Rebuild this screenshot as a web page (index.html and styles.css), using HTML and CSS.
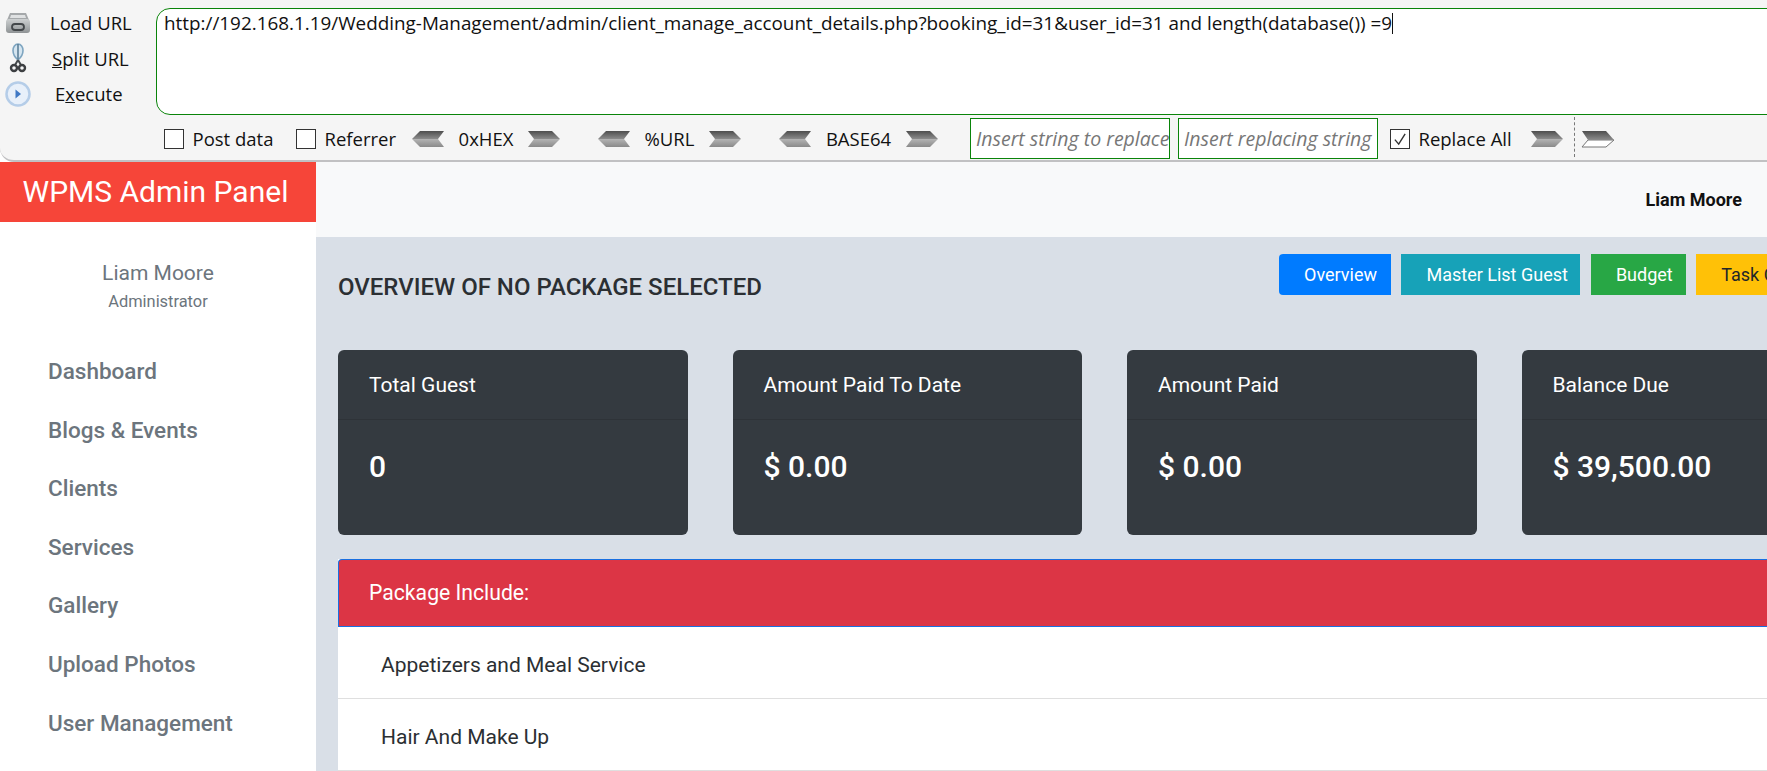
FILE: index.html
```html
<html>
    <head>
        <title>WPMS Admin Panel</title>
        <link rel="stylesheet" href="styles.css">
    </head>
    <body>
        <div class="hackbar">
            <div class="actions">
                <div class="action">
                    <svg class="act-icon" viewBox="0 0 26 26">
                        <defs>
                            <linearGradient id="arrowTop" x1="0" y1="0" x2="0" y2="1"><stop offset="0" stop-color="#4e4e4e"/><stop offset="1" stop-color="#8c8c8c"/></linearGradient>
                            <linearGradient id="arrowLow" x1="0" y1="0" x2="0" y2="1"><stop offset="0" stop-color="#b4b4b4"/><stop offset="1" stop-color="#8a8a8a"/></linearGradient>
                            <linearGradient id="loadBody" x1="0" y1="0" x2="0" y2="1"><stop offset="0" stop-color="#cdd0d1"/><stop offset="1" stop-color="#8f9395"/></linearGradient>
                        </defs>
                        <path d="M5 3h16l3 7H2z" fill="#a5a8aa"/>
                        <path d="M6 5h14l1 3H5z" fill="#dfe1e2"/>
                        <rect x="1" y="9" width="24" height="14" rx="3" fill="url(#loadBody)"/>
                        <rect x="7" y="14" width="12" height="6" rx="3" fill="none" stroke="#43474a" stroke-width="1.800"/>
                    </svg>
                    <span class="act-label act-load">Lo<u>a</u>d URL</span>
                </div>
                <div class="action">
                    <svg class="act-icon act-tall" viewBox="0 0 26 30">
                        <path d="M13 17c-3-2.500-5-6-5-9.500S10 1 13 1s5 3 5 6.500-2 7-5 9.500z" fill="#d5e5f0" stroke="#7ea5c0" stroke-width="1.600"/>
                        <path d="M13 1v15" stroke="#5c7f98" stroke-width="1.600"/>
                        <path d="M13 17l-3 5M13 17l3 5" stroke="#44484b" stroke-width="2"/>
                        <circle cx="9" cy="25" r="3" fill="none" stroke="#3d3f42" stroke-width="2.400"/>
                        <circle cx="17" cy="25" r="3" fill="none" stroke="#3d3f42" stroke-width="2.400"/>
                    </svg>
                    <span class="act-label act-split"><u>S</u>plit URL</span>
                </div>
                <div class="action">
                    <svg class="act-icon" viewBox="0 0 26 26"><circle cx="13" cy="13" r="11.500" fill="#e8f0fa" stroke="#b5cde8" stroke-width="2.500"/><path d="M10.500 8.500l5.500 4.500-5.500 4.500z" fill="#3f78c4"/></svg>
                    <span class="act-label act-exec">E<u>x</u>ecute</span>
                </div>
            </div>
            <div class="hack-right">
                <div class="url-box">http://192.168.1.19/Wedding-Management/admin/client_manage_account_details.php?booking_id=31&amp;user_id=31 and length(database()) =9<span class="caret"></span></div>
                <div class="options">
                    <label class="check check-post"><span class="box"></span>Post data</label>
                    <label class="check check-ref"><span class="box"></span>Referrer</label>
                    <div class="codec codec-hex">
                        <svg class="arrow" viewBox="0 0 34 18"><path d="M9 1h24l-6 8H1z" fill="url(#arrowTop)"/><path d="M1 9h26l6 8H9z" fill="url(#arrowLow)"/></svg>
                        <span>0xHEX</span>
                        <svg class="arrow" viewBox="0 0 34 18"><path d="M1 1h24l8 8H7z" fill="url(#arrowTop)"/><path d="M7 9h26l-8 8H1z" fill="url(#arrowLow)"/></svg>
                    </div>
                    <div class="codec codec-url">
                        <svg class="arrow" viewBox="0 0 34 18"><path d="M9 1h24l-6 8H1z" fill="url(#arrowTop)"/><path d="M1 9h26l6 8H9z" fill="url(#arrowLow)"/></svg>
                        <span>%URL</span>
                        <svg class="arrow" viewBox="0 0 34 18"><path d="M1 1h24l8 8H7z" fill="url(#arrowTop)"/><path d="M7 9h26l-8 8H1z" fill="url(#arrowLow)"/></svg>
                    </div>
                    <div class="codec codec-b64">
                        <svg class="arrow" viewBox="0 0 34 18"><path d="M9 1h24l-6 8H1z" fill="url(#arrowTop)"/><path d="M1 9h26l6 8H9z" fill="url(#arrowLow)"/></svg>
                        <span>BASE64</span>
                        <svg class="arrow" viewBox="0 0 34 18"><path d="M1 1h24l8 8H7z" fill="url(#arrowTop)"/><path d="M7 9h26l-8 8H1z" fill="url(#arrowLow)"/></svg>
                    </div>
                    <div class="replace-in"><span>Insert string to replace</span></div>
                    <div class="replace-in replace-two"><span>Insert replacing string</span></div>
                    <label class="check check-all"><span class="box"><svg viewBox="0 0 14 14"><path d="M3 7.500l3 3.500 5-8" fill="none" stroke="#333" stroke-width="1.100"/></svg></span>Replace All</label>
                    <svg class="arrow" viewBox="0 0 34 18"><path d="M1 1h24l8 8H7z" fill="url(#arrowTop)"/><path d="M7 9h26l-8 8H1z" fill="url(#arrowLow)"/></svg>
                    <span class="dash"></span>
                    <svg class="arrow arrow-last" viewBox="0 0 34 18"><path d="M7 10h26l-8 7H1z" fill="#fff" stroke="#777"/><path d="M1 1h24l8 9H7z" fill="url(#arrowTop)"/></svg>
                </div>
            </div>
        </div>
        <div class="layout">
            <div class="sidebar">
                <div class="brand">WPMS Admin Panel</div>
                <div class="profile">
                    <p class="profile-name">Liam Moore</p>
                    <p class="profile-role">Administrator</p>
                </div>
                <ul class="menu">
                    <li>Dashboard</li>
                    <li>Blogs &amp; Events</li>
                    <li>Clients</li>
                    <li>Services</li>
                    <li>Gallery</li>
                    <li>Upload Photos</li>
                    <li>User Management</li>
                </ul>
            </div>
            <div class="content">
                <div class="topbar"><span>Liam Moore</span></div>
                <div class="main">
                    <div class="title-row">
                        <h1>OVERVIEW OF NO PACKAGE SELECTED</h1>
                        <div class="btns">
                            <a class="btn btn-blue">Overview</a>
                            <a class="btn btn-teal">Master List Guest</a>
                            <a class="btn btn-green">Budget</a>
                            <a class="btn btn-yellow">Task Checklist</a>
                        </div>
                    </div>
                    <div class="cards">
                        <div class="card">
                            <div class="card-head">Total Guest</div>
                            <div class="card-body">0</div>
                        </div>
                        <div class="card">
                            <div class="card-head">Amount Paid To Date</div>
                            <div class="card-body">$ 0.00</div>
                        </div>
                        <div class="card">
                            <div class="card-head">Amount Paid</div>
                            <div class="card-body">$ 0.00</div>
                        </div>
                        <div class="card">
                            <div class="card-head">Balance Due</div>
                            <div class="card-body">$ 39,500.00</div>
                        </div>
                    </div>
                    <div class="package">
                        <div class="package-head">Package Include:</div>
                        <div class="package-row">Appetizers and Meal Service</div>
                        <div class="package-row">Hair And Make Up</div>
                    </div>
                </div>
            </div>
        </div>
    </body>
</html>
```

FILE: styles.css
```css
*{
    margin: 0;
    padding: 0;
    box-sizing: border-box;
}
html,body{
    width: 1767px;
    height: 771px;
    overflow: hidden;
}
body{
    background: #fff;
    font-family: Roboto, sans-serif;
}
.hackbar{
    height: 162px;
    display: flex;
    background: #f5f5f5;
    border-bottom: 2px solid #c1c1c3;
    border-bottom-left-radius: 14px;
    font-family: "Open Sans", "Noto Sans", sans-serif;
    color: #111;
}
.actions{
    width: 156px;
    flex: none;
    padding-top: 5px;
}
.action{
    height: 35.500px;
    display: flex;
    align-items: center;
}
.act-icon{
    width: 26px;
    height: 26px;
    margin-left: 5px;
    flex: none;
}
.act-tall{
    height: 30px;
}
.act-label{
    font-size: 18.500px;
}
.act-load{
    margin-left: 19px;
}
.act-split{
    margin-left: 21px;
}
.act-exec{
    margin-left: 24px;
}
.hack-right{
    flex: 1;
    min-width: 0;
}
.url-box{
    margin-top: 8px;
    height: 107px;
    margin-right: -20px;
    background: #fff;
    border: 1px solid #0a840a;
    border-radius: 14px;
    padding: 1px 7px;
    font-size: 18.880px;
    line-height: 26px;
    white-space: nowrap;
}
.caret{
    display: inline-block;
    width: 1px;
    height: 21px;
    background: #111;
    vertical-align: -4px;
}
.options{
    display: flex;
    align-items: center;
    height: 47px;
    padding-left: 8px;
    font-size: 18.500px;
}
.check{
    display: flex;
    align-items: center;
    flex: none;
    white-space: nowrap;
}
.box{
    width: 20px;
    height: 20px;
    flex: none;
    border: 1px solid #333;
    background: #fff;
    margin-right: 8.500px;
    display: block;
}
.box svg{
    display: block;
    width: 100%;
    height: 100%;
}
.check-post{
    width: 132px;
}
.check-ref{
    width: 115px;
}
.codec{
    display: flex;
    align-items: center;
    justify-content: space-between;
    flex: none;
}
.arrow{
    width: 34px;
    height: 18px;
    flex: none;
}
.codec-hex{
    width: 150px;
}
.codec-url{
    width: 145px;
    margin-left: 36px;
}
.codec-b64{
    width: 161px;
    margin-left: 36px;
}
.replace-in{
    width: 200px;
    height: 41px;
    flex: none;
    margin-left: 31px;
    background: #fff;
    border: 1px solid #0a840a;
    padding: 0 0 0 5px;
    display: flex;
    align-items: center;
    overflow: hidden;
    white-space: nowrap;
    font-size: 19.500px;
    font-style: italic;
    color: #777;
}
.replace-two{
    margin-left: 8px;
}
.check-all{
    width: 140px;
    margin-left: 12px;
}
.dash{
    width: 0;
    height: 40px;
    flex: none;
    margin: 0 0 3px 10px;
    border-left: 1px dashed #777;
}
.arrow-last{
    margin-left: 6px;
}
.layout{
    display: flex;
    height: 609px;
}
.sidebar{
    width: 316px;
    flex: none;
    background: #fff;
}
.brand{
    height: 60px;
    background: #f64539;
    color: #fff;
    font-size: 30px;
    line-height: 60px;
    padding-right: 5px;
    text-align: center;
}
.profile{
    margin-top: 39px;
    text-align: center;
    color: #6c757d;
}
.profile-name{
    font-size: 21px;
    line-height: 24px;
}
.profile-role{
    font-size: 16.400px;
    line-height: 24px;
    margin-top: 5px;
}
.menu{
    list-style: none;
    margin-top: 28px;
    padding-left: 48px;
}
.menu li{
    height: 58.600px;
    line-height: 58.600px;
    font-size: 22.500px;
    font-weight: 500;
    color: #6c757d;
}
.content{
    flex: 1;
    min-width: 0;
}
.topbar{
    height: 75px;
    background: #f8f9fa;
    display: flex;
    align-items: center;
    justify-content: flex-end;
    padding-right: 25px;
    font-size: 18px;
    font-weight: 700;
    color: #111;
}
.main{
    height: 534px;
    background: #d9dfe7;
    padding: 17px 0 0 22px;
    overflow: hidden;
}
.title-row{
    display: flex;
    justify-content: space-between;
    height: 96px;
}
.title-row h1{
    font-size: 24px;
    font-weight: 500;
    color: #2b2f33;
    padding-top: 17px;
    line-height: 32px;
    white-space: nowrap;
}
.btns{
    display: flex;
    gap: 10.500px;
    width: 488px;
    flex: none;
}
.btn{
    height: 41px;
    color: #fff;
    font-size: 18px;
    line-height: 41px;
    padding: 0 13px 0 25px;
    white-space: nowrap;
    flex: none;
}
.btn-blue{
    background: #007bff;
    border-radius: 4px 0 0 4px;
    padding-right: 14px;
}
.btn-teal{
    background: #17a2b8;
    padding-right: 12.500px;
}
.btn-green{
    background: #28a745;
}
.btn-yellow{
    background: #ffc107;
    color: #212529;
}
.cards{
    display: flex;
    gap: 45px;
    width: 1600px;
}
.card{
    width: 349.500px;
    height: 185px;
    flex: none;
    background: #343a40;
    border-radius: 6px;
    color: #fff;
}
.card-head{
    height: 70px;
    border-bottom: 1px solid #2e3338;
    padding: 0 31px;
    font-size: 21px;
    line-height: 70px;
}
.card-body{
    padding: 0 31px;
    font-size: 30px;
    font-weight: 500;
    line-height: 94px;
}
.package{
    margin-top: 24px;
    width: 1600px;
    background: #fff;
}
.package-head{
    height: 68px;
    background: #dc3545;
    border: 1px solid #1a6fe0;
    border-right: 0;
    border-radius: 4px 0 0 0;
    color: #fff;
    font-size: 21.200px;
    line-height: 66px;
    padding-left: 30px;
}
.package-row{
    height: 72px;
    line-height: 76px;
    padding-left: 43px;
    font-size: 21px;
    color: #2b2f33;
    border-bottom: 1px solid #dfdfdf;
}
```
